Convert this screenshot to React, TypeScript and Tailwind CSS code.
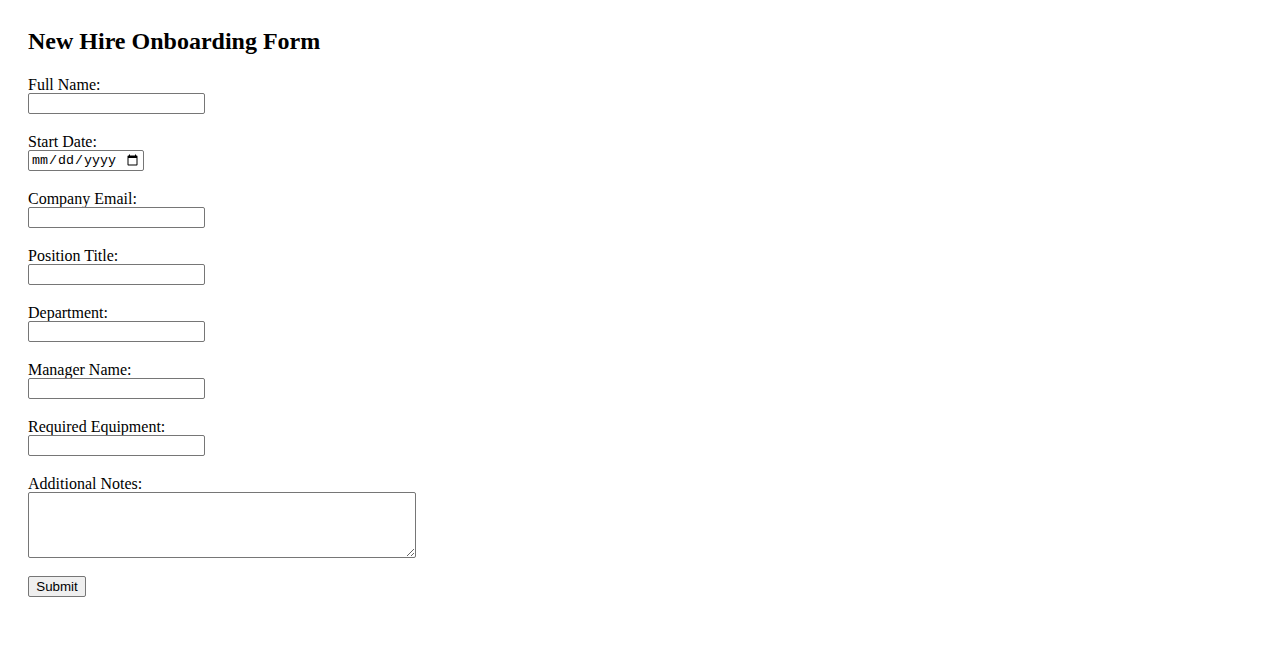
import * as React from 'react';
import { useState } from 'react';

const fields = [
  { id: 'fullName', label: 'Full Name:', type: 'text' },
  { id: 'startDate', label: 'Start Date:', type: 'date' },
  { id: 'email', label: 'Company Email:', type: 'email' },
  { id: 'position', label: 'Position Title:', type: 'text' },
  { id: 'department', label: 'Department:', type: 'text' },
  { id: 'manager', label: 'Manager Name:', type: 'text' },
  { id: 'equipment', label: 'Required Equipment:', type: 'text' },
];

export default function App() {
  const [values, setValues] = useState<Record<string, string>>({});
  const [notes, setNotes] = useState('');

  const handleSubmit = (e: React.FormEvent) => {
    e.preventDefault();
  };

  return (
    <div className="min-h-screen bg-white pl-[28px] pt-[28px] font-['Liberation_Serif',serif] text-black">
      <h2 className="h-[28px] text-[24px] font-bold leading-[26px]">New Hire Onboarding Form</h2>

      <form onSubmit={handleSubmit} className="mt-[18px] flex flex-col items-start">
        {fields.map((f) => (
          <div key={f.id} className="mb-[17px] flex flex-col items-start">
            <label htmlFor={f.id} className="block h-[18px] text-[16px] leading-[22px]">
              {f.label}
            </label>
            {f.type === 'date' ? (
              <input
                id={f.id}
                type="date"
                className="mt-[1px] box-border h-[21px] w-[116px] rounded-[2px] border border-[#767676] bg-white px-[2px] py-[1px] font-['Liberation_Mono',monospace] text-[13.33px] leading-[17px]"
                value={values[f.id] || ''}
                onChange={(e) => setValues({ ...values, [f.id]: e.target.value })}
              />
            ) : (
              <input
                id={f.id}
                type={f.type}
                className="mt-[1px] box-border h-[21px] w-[177px] rounded-[2px] border border-[#767676] bg-white px-[2px] py-[1px] font-['Liberation_Sans',sans-serif] text-[13.33px]"
                value={values[f.id] || ''}
                onChange={(e) => setValues({ ...values, [f.id]: e.target.value })}
              />
            )}
          </div>
        ))}

        <div className="flex flex-col items-start">
          <label htmlFor="notes" className="block h-[18px] text-[16px] leading-[22px]">
            Additional Notes:
          </label>
          <textarea
            id="notes"
            className="mt-[1px] box-border h-[66px] w-[388px] rounded-[2px] border border-[#767676] bg-white px-[2px] py-[2px] font-['Liberation_Mono',monospace] text-[13.33px]"
            value={notes}
            onChange={(e) => setNotes(e.target.value)}
          />
        </div>

        <button
          type="submit"
          className="mt-[18px] box-border h-[21px] w-[58px] rounded-[2px] border border-[#767676] bg-[#efefef] px-[6px] py-[1px] font-['Liberation_Sans',sans-serif] text-[13.33px] leading-[17px] text-black"
        >
          Submit
        </button>
      </form>
    </div>
  );
}
